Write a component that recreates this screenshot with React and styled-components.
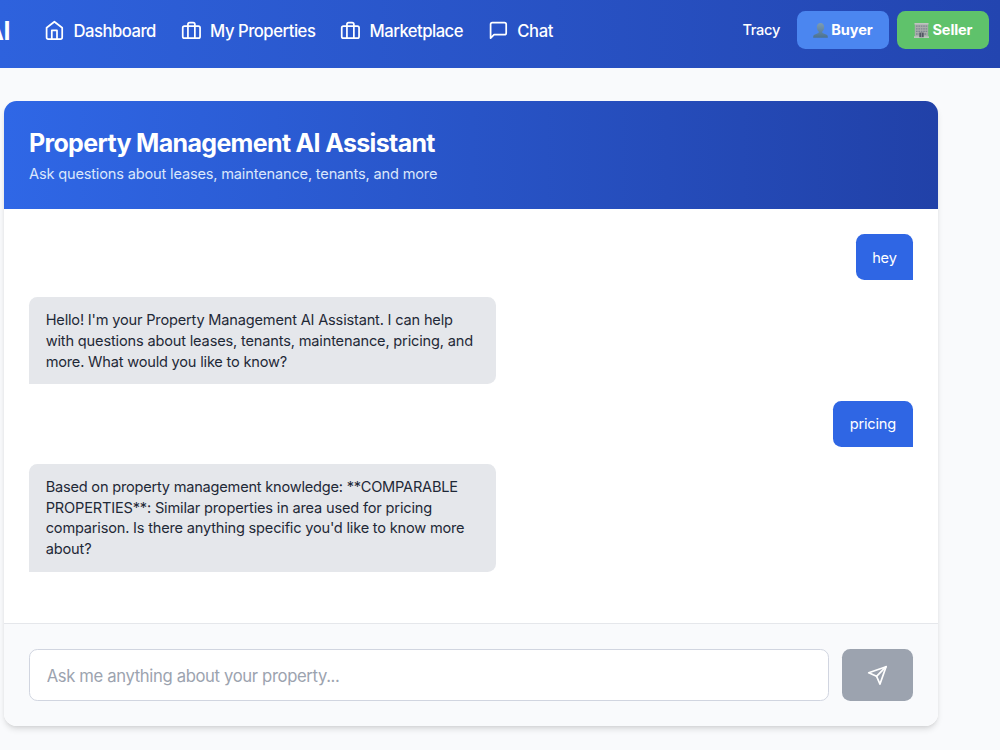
import React from "react";
import styled, { createGlobalStyle } from "styled-components";
import { FiHome, FiBriefcase, FiMessageSquare, FiSend } from "react-icons/fi";

const GlobalStyle = createGlobalStyle`
  *, *::before, *::after { box-sizing: border-box; }
  body {
    margin: 0;
    height: 750px;
    overflow: hidden;
    background: #f9fafc;
    font-family: Inter, "Liberation Sans", sans-serif;
    -webkit-font-smoothing: antialiased;
  }
`;

const Page = styled.div`
  width: 1000px;
  height: 750px;
  overflow: hidden;
`;

const NavBar = styled.nav`
  display: flex;
  align-items: center;
  justify-content: space-between;
  height: 67.6px;
  padding: 0 10.8px 7.2px 0;
  background: linear-gradient(90deg, #2e62dd 0%, #2345b0 100%);
  color: #fff;
`;

const NavLeft = styled.div`
  display: flex;
  align-items: center;
`;

const Brand = styled.div`
  width: 10px;
  margin-right: 34.3px;
  padding-top: 2px;
  display: flex;
  justify-content: flex-end;
  font-size: 25px;
  line-height: 33px;
  font-weight: 700;
  letter-spacing: -0.5px;
`;

const NavLink = styled.a`
  display: flex;
  align-items: center;
  gap: 8.5px;
  width: ${(p) => p.$width}px;
  font-size: 16.67px;
  font-weight: 500;
  line-height: 25px;
  letter-spacing: ${(p) => p.$tracking || -0.52}px;
  white-space: nowrap;

  svg { width: 20.8px; height: 20.8px; flex: none; }
`;

const NavLabel = styled.span`
  padding-top: 2px;
`;

const NavRight = styled.div`
  display: flex;
  align-items: center;
`;

const UserName = styled.span`
  margin-right: 16.7px;
  font-size: 14.6px;
  font-weight: 450;
  letter-spacing: -0.3px;
`;

const RoleButton = styled.button`
  display: flex;
  align-items: center;
  justify-content: center;
  gap: 3.4px;
  width: 92px;
  height: 37.5px;
  margin-left: ${(p) => (p.$spaced ? 8.5 : 0)}px;
  padding: 0;
  border: 0;
  border-radius: 8.3px;
  background: ${(p) => p.$color};
  color: #fff;
  font: 650 14.6px/21px Inter, "Liberation Sans", sans-serif;
  letter-spacing: -0.15px;

  svg { width: 15px; height: 15px; flex: none; }
`;

const Card = styled.main`
  display: flex;
  flex-direction: column;
  width: 934px;
  height: 625px;
  margin: 33.4px 0 0 4px;
  overflow: hidden;
  border-radius: 12.5px;
  background: #fff;
  box-shadow: 0 4px 6px -1px rgba(0, 0, 0, 0.12), 0 2px 4px -2px rgba(0, 0, 0, 0.1);
`;

const CardHeader = styled.header`
  height: 108.4px;
  flex: none;
  padding: 26px 25px 24px;
  background: linear-gradient(90deg, #2f67e6 0%, #2141a8 100%);
  color: #fff;
`;

const Title = styled.h1`
  margin: 0;
  font-size: 25px;
  line-height: 33.4px;
  font-weight: 750;
  letter-spacing: -0.67px;
  white-space: nowrap;
`;

const Subtitle = styled.p`
  margin: 4px 0 0;
  color: #dbe7fb;
  font-size: 14.6px;
  line-height: 21px;
  letter-spacing: -0.175px;
  white-space: nowrap;
`;

const Messages = styled.section`
  flex: 1;
  display: flex;
  flex-direction: column;
  gap: 16.7px;
  padding: 25px;
`;

const Bubble = styled.div`
  align-self: ${(p) => (p.$own ? "flex-end" : "flex-start")};
  width: ${(p) => p.$width}px;
  padding: 13.2px 0 11.8px 16.7px;
  border-radius: ${(p) => (p.$own ? "8.3px 8.3px 0 8.3px" : "8.3px 8.3px 8.3px 0")};
  background: ${(p) => (p.$own ? "#2f66e4" : "#e5e7eb")};
  color: ${(p) => (p.$own ? "#fff" : "#1f2937")};
  font-size: 14.6px;
  line-height: 20.83px;
`;

const Line = styled.span`
  display: block;
  white-space: nowrap;
  letter-spacing: ${(p) => p.$tracking || -0.2}px;
`;

const Composer = styled.footer`
  display: flex;
  gap: 12.8px;
  height: 103px;
  flex: none;
  padding: 25px;
  border-top: 1px solid #e5e7eb;
  background: #f9fafc;
`;

const Input = styled.input`
  flex: 1;
  min-width: 0;
  height: 52px;
  padding: 2px 16.7px 0;
  border: 1px solid #d1d5e0;
  border-radius: 8.3px;
  background: #fff;
  outline: 0;
  font: 400 16.67px Inter, "Liberation Sans", sans-serif;
  letter-spacing: -0.36px;

  &::placeholder { color: #9ca3af; opacity: 1; }
`;

const SendButton = styled.button`
  display: flex;
  align-items: center;
  justify-content: center;
  width: 71px;
  height: 52px;
  padding: 0;
  border: 0;
  border-radius: 8.3px;
  background: #9ca3af;
  color: #fff;

  svg { width: 20.8px; height: 20.8px; }
`;

const PersonIcon = () => (
  <svg viewBox="0 0 15 15" aria-hidden="true">
    <defs>
      <linearGradient id="person" x1="0" y1="0" x2="0" y2="1">
        <stop offset="0" stopColor="#7d9cb2" />
        <stop offset="1" stopColor="#4b7291" />
      </linearGradient>
    </defs>
    <path
      fill="url(#person)"
      d="M7.5 0C9.900 0 11.200 1.700 11.200 4.100c0 2-.8 3.700-1.900 4.500v1c0 .7 1 .9 2.500 1.300 2 .5 3 1.300 3 2.900v.9H.2v-.9c0-1.600 1-2.400 3-2.900 1.500-.4 2.500-.6 2.500-1.300v-1C4.600 7.800 3.800 6.100 3.800 4.100 3.800 1.700 5.100 0 7.500 0z"
    />
  </svg>
);

const BuildingIcon = () => (
  <svg viewBox="0 0 15 15" aria-hidden="true">
    <path fill="#a9adab" d="M.8 .5h13.400v13H.8z" />
    <path fill="#c0c3c1" d="M.5 0h14v1.600H.5zM0 13.300h15V15H0z" />
    <path stroke="#7c8791" strokeWidth="1.300" strokeDasharray="1.600 .8" d="M2 3.200h11.200M2 5.800h11.200M2 8.400h11.200M2 11h2.800M10.400 11h2.800" />
    <path fill="#505762" d="M5.300 9.600h4.400v4.600H5.300z" />
    <path stroke="#b5b9b8" strokeWidth=".5" d="M7.500 10v4" />
  </svg>
);

const replies = {
  greeting: [
    ["Hello! I'm your Property Management AI Assistant. I can help", -0.19],
    ["with questions about leases, tenants, maintenance, pricing, and", -0.17],
    ["more. What would you like to know?", -0.2],
  ],
  pricing: [
    ["Based on property management knowledge: **COMPARABLE", -0.22],
    ["PROPERTIES**: Similar properties in area used for pricing", -0.18],
    ["comparison. Is there anything specific you'd like to know more", -0.2],
    ["about?", -0.15],
  ],
};

const Reply = ({ lines }) => (
  <Bubble $width={467}>
    {lines.map(([text, tracking]) => (
      <Line key={text} $tracking={tracking}>{text} </Line>
    ))}
  </Bubble>
);

export default function App() {
  return (
    <Page>
      <GlobalStyle />
      <NavBar>
        <NavLeft>
          <Brand>AI</Brand>
          <NavLink $width={136.5}><FiHome /><NavLabel>Dashboard</NavLabel></NavLink>
          <NavLink $width={159.5} $tracking={-0.49}><FiBriefcase /><NavLabel>My Properties</NavLabel></NavLink>
          <NavLink $width={147.6}><FiBriefcase /><NavLabel>Marketplace</NavLabel></NavLink>
          <NavLink $width={80} $tracking={-0.35}><FiMessageSquare /><NavLabel>Chat</NavLabel></NavLink>
        </NavLeft>
        <NavRight>
          <UserName>Tracy</UserName>
          <RoleButton $color="#4b86f0"><PersonIcon />Buyer</RoleButton>
          <RoleButton $color="#5fc26b" $spaced><BuildingIcon />Seller</RoleButton>
        </NavRight>
      </NavBar>
      <Card>
        <CardHeader>
          <Title>Property Management AI Assistant</Title>
          <Subtitle>Ask questions about leases, maintenance, tenants, and more</Subtitle>
        </CardHeader>
        <Messages>
          <Bubble $own $width={57.5}><Line>hey</Line></Bubble>
          <Reply lines={replies.greeting} />
          <Bubble $own $width={80}><Line>pricing</Line></Bubble>
          <Reply lines={replies.pricing} />
        </Messages>
        <Composer>
          <Input placeholder="Ask me anything about your property..." />
          <SendButton aria-label="Send"><FiSend /></SendButton>
        </Composer>
      </Card>
    </Page>
  );
}
